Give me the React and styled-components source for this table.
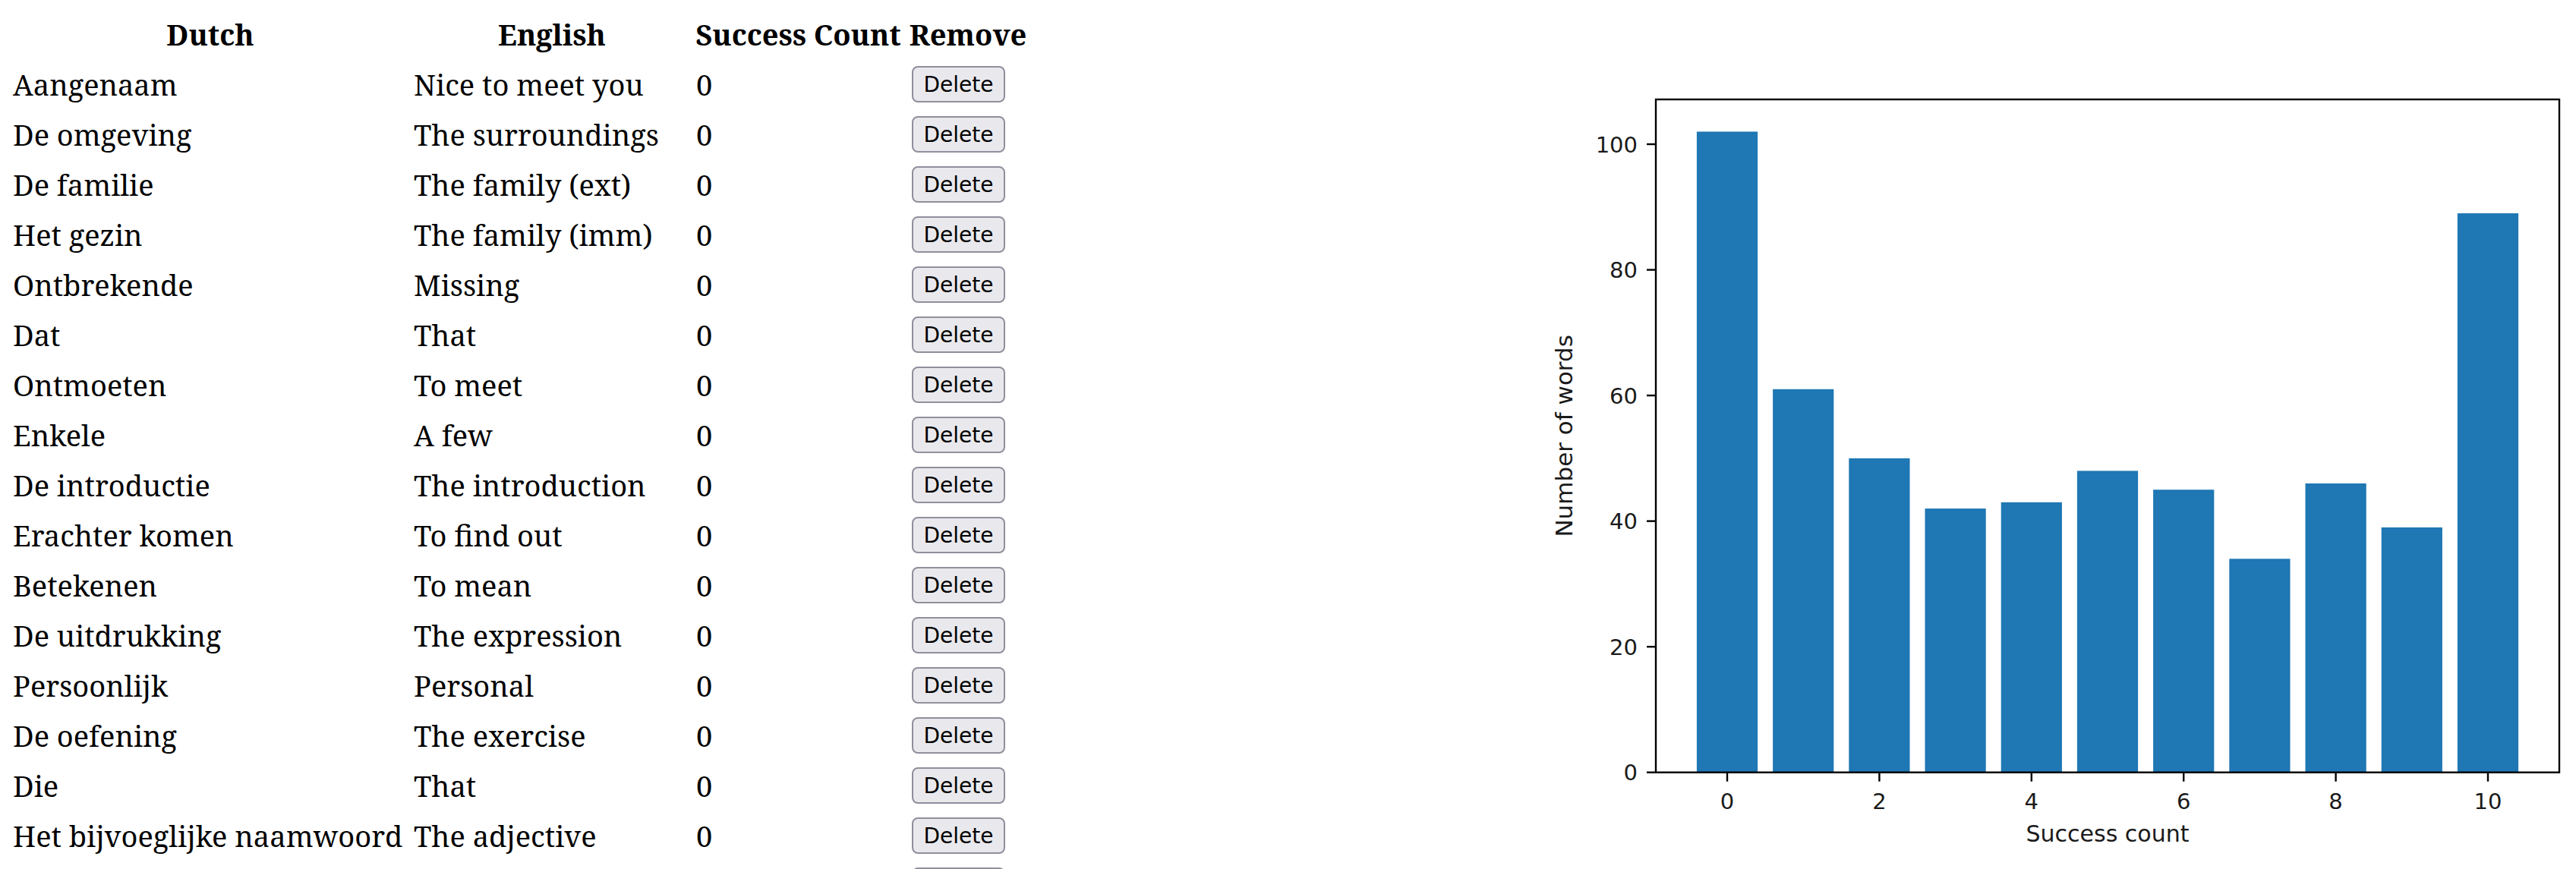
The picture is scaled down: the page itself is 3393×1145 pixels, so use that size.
import React from 'react';
import styled, { createGlobalStyle } from 'styled-components';

const GlobalStyle = createGlobalStyle`
  html, body {
    margin: 0;
    padding: 0;
    background: #ffffff;
  }
  body {
    font-family: 'Noto Serif', 'DejaVu Serif', 'Liberation Serif', serif;
    color: #000000;
  }
`;

const Page = styled('div')`
  display: flex;
  align-items: flex-start;
  width: 3393px;
  height: 1145px;
  overflow: hidden;
`;

const WordTable = styled('table')`
  margin: 12px 0 0 13px;
  border-collapse: separate;
  border-spacing: 0;
  table-layout: fixed;
  font-size: 38px;
`;

const HeadCell = styled('th')`
  width: ${(p) => p.w}px;
  height: 66px;
  padding: 0;
  text-align: center;
  font-weight: bold;
  white-space: nowrap;
`;

const Cell = styled('td')`
  height: 66px;
  padding: 0 0 0 4px;
  white-space: nowrap;
  vertical-align: middle;
`;

const DeleteButton = styled('button')`
  display: block;
  box-sizing: border-box;
  width: 123px;
  height: 48px;
  margin-left: 7px;
  padding: 0;
  background: #e9e9ed;
  border: 2px solid #8f8f9d;
  border-radius: 8px;
  font-family: 'DejaVu Sans', 'Noto Sans', sans-serif;
  font-size: 28px;
  color: #000000;
`;

const ChartPane = styled('div')`
  flex: 0 0 1393px;
  margin-left: auto;
`;

const Chart = styled('svg')`
  display: block;
  font-family: 'DejaVu Sans', sans-serif;
`;

const words = [
  ['Aangenaam', 'Nice to meet you'],
  ['De omgeving', 'The surroundings'],
  ['De familie', 'The family (ext)'],
  ['Het gezin', 'The family (imm)'],
  ['Ontbrekende', 'Missing'],
  ['Dat', 'That'],
  ['Ontmoeten', 'To meet'],
  ['Enkele', 'A few'],
  ['De introductie', 'The introduction'],
  ['Erachter komen', 'To find out'],
  ['Betekenen', 'To mean'],
  ['De uitdrukking', 'The expression'],
  ['Persoonlijk', 'Personal'],
  ['De oefening', 'The exercise'],
  ['Die', 'That'],
  ['Het bijvoeglijke naamwoord', 'The adjective']
];

const counts = [102, 61, 50, 42, 43, 48, 45, 34, 46, 39, 89];

// plot area in svg coordinates
const X0 = 181;
const X1 = 1371;
const Y0 = 131;
const Y1 = 1017.7;
const xAt = (v) => 275 + v * 100.2;
const yAt = (v) => Y1 - v * 8.277;

const BarChart = () => (
  <Chart width="1393" height="1145" viewBox="0 0 1393 1145">
    {counts.map((c, i) => (
      <rect
        key={i}
        x={xAt(i) - 40.1}
        y={yAt(c)}
        width={80.2}
        height={Y1 - yAt(c)}
        fill="#1f77b4"
      />
    ))}
    <rect x={X0} y={Y0} width={X1 - X0} height={Y1 - Y0} fill="none" stroke="#000" strokeWidth="2.4" />
    {[0, 20, 40, 60, 80, 100].map((v) => (
      <g key={v}>
        <line x1={X0 - 12} x2={X0} y1={yAt(v)} y2={yAt(v)} stroke="#000" strokeWidth="2.4" />
        <text x={X0 - 24} y={yAt(v) + 10.5} textAnchor="end" fontSize="29" fill="#1a1a1a">
          {v}
        </text>
      </g>
    ))}
    {[0, 2, 4, 6, 8, 10].map((v) => (
      <g key={v}>
        <line x1={xAt(v)} x2={xAt(v)} y1={Y1} y2={Y1 + 12} stroke="#000" strokeWidth="2.4" />
        <text x={xAt(v)} y={1066} textAnchor="middle" fontSize="29" fill="#1a1a1a">
          {v}
        </text>
      </g>
    ))}
    <text x={(X0 + X1) / 2} y={1109} textAnchor="middle" fontSize="30" fill="#1a1a1a">
      Success count
    </text>
    <text transform={`translate(71, ${(Y0 + Y1) / 2}) rotate(-90)`} textAnchor="middle" fontSize="31" fill="#1a1a1a">
      Number of words
    </text>
  </Chart>
);

const App = () => (
  <>
    <GlobalStyle />
    <Page>
      <WordTable>
        <thead>
          <tr>
            <HeadCell w={528}>Dutch</HeadCell>
            <HeadCell w={372}>English</HeadCell>
            <HeadCell w={277}>Success Count</HeadCell>
            <HeadCell w={170}>Remove</HeadCell>
          </tr>
        </thead>
        <tbody>
          {words.map(([nl, en], idx) => (
            <tr key={idx}>
              <Cell>{nl}</Cell>
              <Cell>{en}</Cell>
              <Cell>0</Cell>
              <Cell>
                <DeleteButton>Delete</DeleteButton>
              </Cell>
            </tr>
          ))}
          {/* next row, below the fold: only its button's top edge shows */}
          <tr>
            <Cell />
            <Cell />
            <Cell />
            <Cell>
              <DeleteButton aria-label="Delete" />
            </Cell>
          </tr>
        </tbody>
      </WordTable>
      <ChartPane>
        <BarChart />
      </ChartPane>
    </Page>
  </>
);

export default App;
